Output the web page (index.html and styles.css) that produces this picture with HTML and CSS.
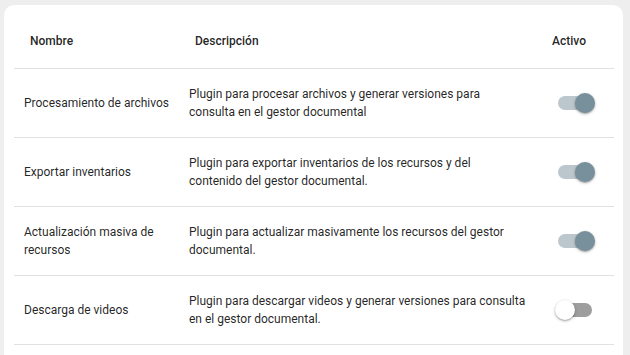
FILE: index.html
```html
<!DOCTYPE html>
<html lang="es">
<head>
<meta charset="utf-8">
<link rel="stylesheet" href="styles.css">
</head>
<body>
<div class="card">
  <table class="plugins">
    <colgroup>
      <col class="c-name">
      <col class="c-desc">
      <col class="c-active">
    </colgroup>
    <thead>
      <tr>
        <th>Nombre</th>
        <th>Descripción</th>
        <th>Activo</th>
      </tr>
    </thead>
    <tbody>
      <tr>
        <td>Procesamiento de archivos</td>
        <td>Plugin para procesar archivos y generar versiones para consulta en el gestor documental</td>
        <td class="sw-cell"><span class="switch on"><span class="track"></span><span class="thumb"></span></span></td>
      </tr>
      <tr>
        <td>Exportar inventarios</td>
        <td>Plugin para exportar inventarios de los recursos y del contenido del gestor documental.</td>
        <td class="sw-cell"><span class="switch on"><span class="track"></span><span class="thumb"></span></span></td>
      </tr>
      <tr>
        <td>Actualización masiva de recursos</td>
        <td>Plugin para actualizar masivamente los recursos del gestor documental.</td>
        <td class="sw-cell"><span class="switch on"><span class="track"></span><span class="thumb"></span></span></td>
      </tr>
      <tr>
        <td>Descarga de videos</td>
        <td>Plugin para descargar videos y generar versiones para consulta en el gestor documental.</td>
        <td class="sw-cell"><span class="switch"><span class="track"></span><span class="thumb"></span></span></td>
      </tr>
    </tbody>
  </table>
</div>
</body>
</html>
```

FILE: styles.css
```css
html, body {
  margin: 0;
  background: #eeeeee;
  font-family: Roboto, "Liberation Sans", sans-serif;
  color: rgba(0, 0, 0, 0.87);
}
body {
  padding: 5px 7px 0 4px;
  height: 355px;
  box-sizing: border-box;
  overflow: hidden;
}
.card {
  background: #ffffff;
  border-radius: 10px 10px 0 0;
  padding: 8px 9px 10px 10px;
}
.plugins {
  width: 600px;
  border-collapse: collapse;
  table-layout: fixed;
}
.c-name { width: 165px; }
.c-desc { width: 357px; }
.c-active { width: 78px; }
th {
  height: 55px;
  padding: 0 10px 0 16px;
  text-align: left;
  font-size: 12px;
  font-weight: 500;
  color: rgba(0, 0, 0, 0.87);
  border-bottom: 1px solid #e0e0e0;
  vertical-align: middle;
}
td {
  height: 68px;
  padding: 0 10px;
  font-size: 12px;
  line-height: 18px;
  border-bottom: 1px solid #e0e0e0;
  vertical-align: middle;
}
.sw-cell {
  padding: 0;
  text-align: center;
}
.switch {
  position: relative;
  display: inline-block;
  width: 36px;
  height: 20px;
  vertical-align: middle;
  margin-left: -2px;
}
.track {
  position: absolute;
  left: 2px;
  top: 3px;
  width: 34px;
  height: 14px;
  border-radius: 7px;
  background: #9e9e9e;
}
.thumb {
  position: absolute;
  left: -1px;
  top: 0;
  width: 20px;
  height: 20px;
  border-radius: 50%;
  background: #ffffff;
  box-shadow: 0 1px 3px rgba(0, 0, 0, 0.3), 0 1px 1px rgba(0, 0, 0, 0.14);
}
.switch.on .track {
  background: #bcc7cd;
}
.switch.on .thumb {
  left: 19px;
  background: #78909c;
}
```
